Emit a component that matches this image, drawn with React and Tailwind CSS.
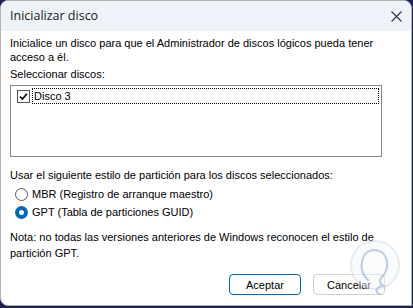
import React from 'react';

function Check() {
    return (
        <span className="w-[13px] h-[13px] border border-[#555] bg-white flex items-center justify-center shrink-0">
            <svg width="9" height="9" viewBox="0 0 9 9">
                <path d="M1 4.5 L3.4 7 L8 1.8" fill="none" stroke="#000" strokeWidth="1.6" />
            </svg>
        </span>
    );
}

function Radio({ checked }) {
    if (checked) {
        return (
            <span className="w-[13px] h-[13px] rounded-full bg-[#0067c0] flex items-center justify-center shrink-0">
                <span className="w-[5px] h-[5px] rounded-full bg-white" />
            </span>
        );
    }
    return <span className="w-[13px] h-[13px] rounded-full border border-[#5a5a5a] bg-white shrink-0" />;
}

function Watermark() {
    return (
        <svg className="absolute right-[10px] bottom-[6px] opacity-50" width="52" height="60" viewBox="0 0 52 60">
            <circle cx="26" cy="26" r="24" fill="#f5f8fc" stroke="#cfd9e8" strokeWidth="2" />
            <path d="M19 41 C8 31 12 11 25 11 C40 11 42 31 32 39 C30 42 31 45 34 47 C27 48 25 53 31 55" fill="none" stroke="#7d9dcc" strokeWidth="2.2" strokeLinecap="round" />
        </svg>
    );
}

export default function App() {
    return (
        <div className="w-[413px] h-[308px] bg-[#1c1f5a] overflow-hidden" style={{ fontFamily: '"Liberation Sans", Arial, sans-serif' }}>
            <div className="relative w-[412px] h-[306px] bg-white border border-[#b4b4b4] rounded-t-[8px] rounded-bl-[8px] overflow-hidden flex flex-col">
                <div className="h-[30px] bg-[#eef3f9] flex items-center justify-between pl-[9px] pr-[9px] shrink-0">
                    <span className="text-[12.5px] text-[#1a1a1a]" style={{ fontFamily: '"Open Sans", "Noto Sans", sans-serif' }}>Inicializar disco</span>
                    <svg width="11" height="11" viewBox="0 0 11 11">
                        <path d="M0.5 0.5 L10.5 10.5 M10.5 0.5 L0.5 10.5" stroke="#333" strokeWidth="1.1" />
                    </svg>
                </div>
                <div className="flex-1 px-[9px] pt-[5px] text-[11px] text-black leading-[14px]">
                    <p>Inicialice un disco para que el Administrador de discos lógicos pueda tener acceso a él.</p>
                    <p className="mt-[3px]">Seleccionar discos:</p>
                    <div className="mt-[4px] mr-[20px] h-[72px] border border-[#828790] p-[2px]">
                        <div className="flex items-center gap-[2px] pl-[4px]">
                            <Check />
                            <span className="flex-1 h-[16px] border border-dotted border-black px-[1px] leading-[14px]">Disco 3</span>
                        </div>
                    </div>
                    <p className="mt-[11px]">Usar el siguiente estilo de partición para los discos seleccionados:</p>
                    <div className="mt-[5px] flex items-center gap-[4px] pl-[5px]">
                        <Radio />
                        <span>MBR (Registro de arranque maestro)</span>
                    </div>
                    <div className="mt-[4px] flex items-center gap-[4px] pl-[5px]">
                        <Radio checked />
                        <span>GPT (Tabla de particiones GUID)</span>
                    </div>
                    <p className="mt-[10px] leading-[16px]">Nota: no todas las versiones anteriores de Windows reconocen el estilo de partición GPT.</p>
                    <div className="mt-[13px] flex justify-end gap-[12px] pr-[17px]">
                        <button className="w-[72px] h-[21px] rounded-[4px] border border-[#0067c0] bg-white text-[11px]">Aceptar</button>
                        <button className="w-[72px] h-[21px] rounded-[4px] border border-[#cfcfcf] bg-white text-[11px]">Cancelar</button>
                    </div>
                </div>
                <Watermark />
            </div>
        </div>
    );
}
